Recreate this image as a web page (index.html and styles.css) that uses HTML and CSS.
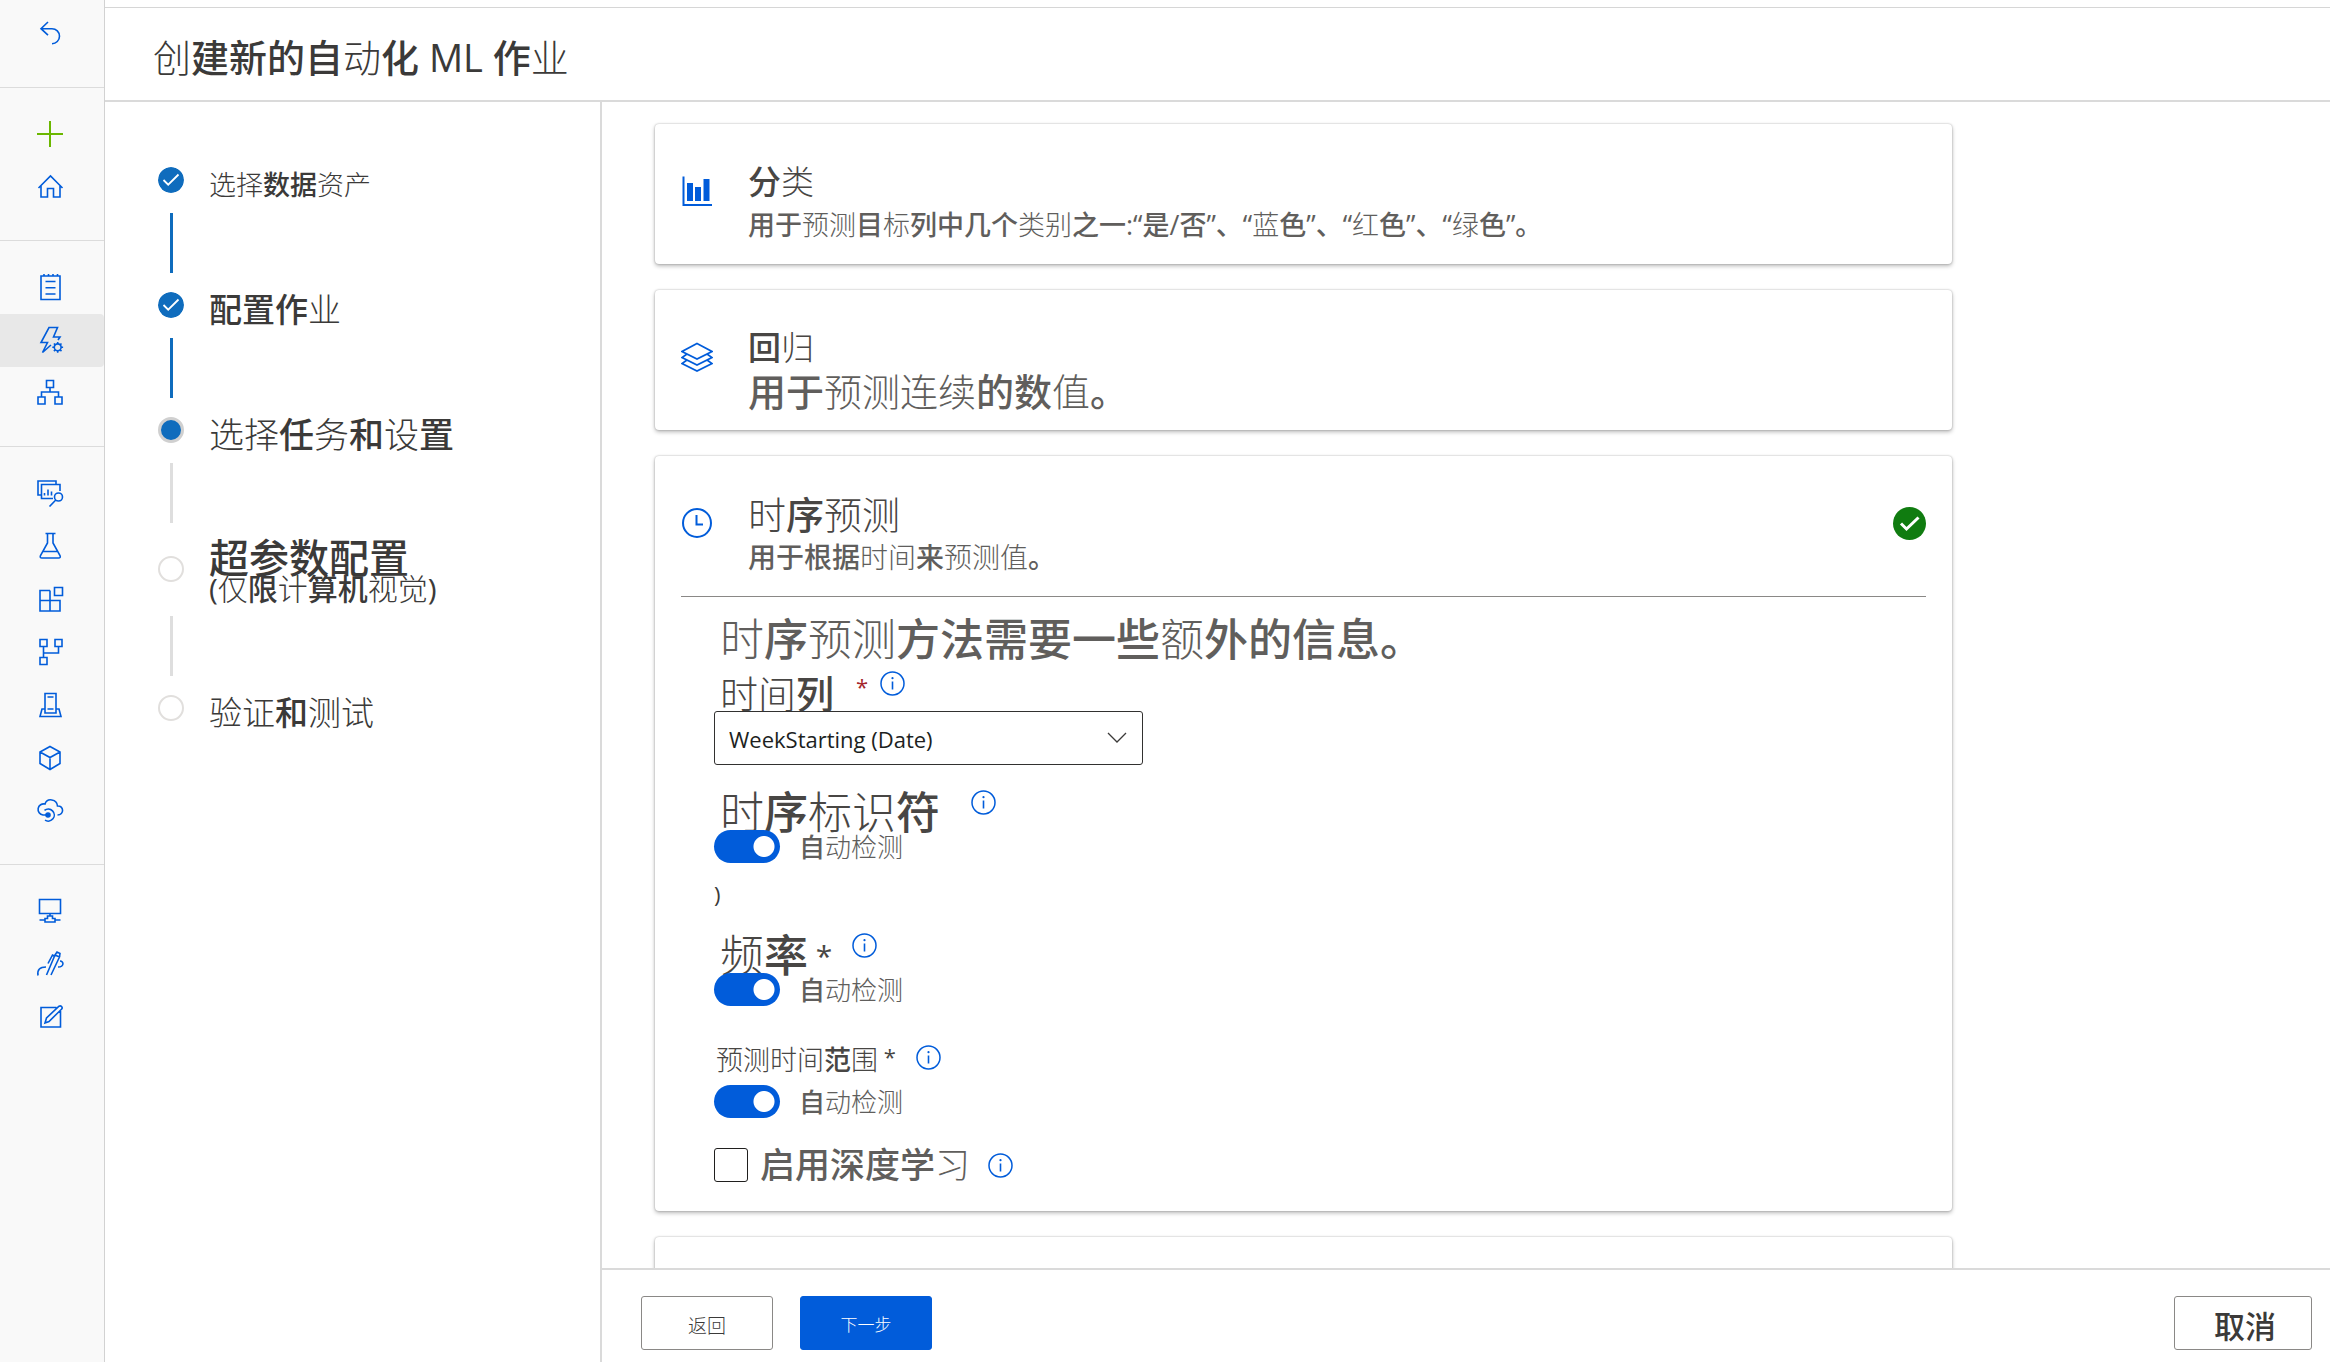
FILE: index.html
```html
<!DOCTYPE html>
<html lang="zh-CN">
<head>
<meta charset="utf-8">
<meta name="viewport" content="width=device-width, initial-scale=1">
<title>创建新的自动化 ML 作业</title>
<link rel="stylesheet" href="styles.css">
</head>
<body>
<svg class="defs" aria-hidden="true">
  <symbol id="info" viewBox="0 0 25 25"><circle cx="12.5" cy="12.5" r="11.5" fill="none" stroke="currentColor" stroke-width="1.5"/><path d="M12.5 10.5v8" stroke="currentColor" stroke-width="1.6"/><circle cx="12.5" cy="7.2" r="1.1" fill="currentColor"/></symbol>
  <symbol id="done" viewBox="0 0 26 26"><circle cx="13" cy="13" r="13" fill="#0f6cbd"/><path d="M5.5 13l4.7 4.7L20.500 7.500" fill="none" stroke="#fff" stroke-width="1.8"/></symbol>
</svg>
<div class="app">
  <nav class="rail" aria-label="导航">
    <div class="rail-group rail-group-first">
      <a href="#" class="rail-item" aria-label="后退"><svg viewBox="0 0 28 28"><path d="M12 2L5 8.700l7 6.500M5 8.700h11a7.500 7.500 0 0 1 0 15"/></svg></a>
    </div>
    <div class="rail-group">
      <a href="#" class="rail-item rail-new" aria-label="新建"><svg viewBox="0 0 28 28"><path d="M14 1v26M1 14h26"/></svg></a>
      <a href="#" class="rail-item" aria-label="主页"><svg viewBox="0 0 28 28"><path d="M2.500 15L14.500 3l12 12M5 12.500V24h6.500v-8.500h6V24H24V12.500"/></svg></a>
    </div>
    <div class="rail-group">
      <a href="#" class="rail-item" aria-label="笔记本"><svg viewBox="0 0 28 28"><path d="M5 3h19v23.500H5zM8 1v2M12.500 1v2M17 1v2M21.500 1v2M9.500 8.500h10M9.500 14.800h10M9.500 21h10"/></svg></a>
      <a href="#" class="rail-item active" aria-label="自动化 ML" aria-current="page"><svg viewBox="0 0 28 28"><path d="M22 14l2-3h-6.500l4-9.500H13L5 16.500h6.500L6.500 26.500l8.500-7.500"/><circle cx="21.700" cy="21.300" r="3.400"/><path d="M21.700 17.900v-2M21.700 26.700v-2M18.300 21.300h-2M27.100 21.300h-2M19.300 18.900l-1.400-1.400M25.500 25.100l-1.400-1.400M19.300 23.700l-1.400 1.400M25.500 17.500l-1.400 1.400"/></svg></a>
      <a href="#" class="rail-item" aria-label="设计器"><svg viewBox="0 0 28 28"><path d="M10.500 1.500h7v7h-7zM2 18h7v7H2zM19 18h7v7h-7zM14 8.500V13M5.500 18v-5h17v5"/></svg></a>
    </div>
    <div class="rail-group">
      <a href="#" class="rail-item" aria-label="数据"><svg viewBox="0 0 28 28"><path d="M20 5V2H2v14h3.500M24 12V5.500H5.500v14H17M8.500 16.500V14M12 16.500v-6M15.500 16.500v-4M19.800 21l-6.300 6.500"/><circle cx="22.500" cy="18" r="4"/></svg></a>
      <a href="#" class="rail-item" aria-label="作业"><svg viewBox="0 0 28 28"><path d="M9.500 1.500h10M11.500 1.500V11L4.500 23.500q-1 2.500 1.500 2.500h16.500q2.500 0 1.500-2.500L17 11V1.500M7 19.500h15"/></svg></a>
      <a href="#" class="rail-item" aria-label="组件"><svg viewBox="0 0 28 28"><path d="M14 5.500H4V26h20V15.500H4M14 5.500V26M18.500 2.500h8v8h-8z"/></svg></a>
      <a href="#" class="rail-item" aria-label="管道"><svg viewBox="0 0 28 28"><path d="M4 1.500h7v7H4zM19 1.500h7v7h-7zM4 19.500h7v7H4zM7.500 8.500v11M7.500 15h15V8.500"/></svg></a>
      <a href="#" class="rail-item" aria-label="环境"><svg viewBox="0 0 28 28"><path d="M9 22V2.500h11V22zM11.500 6h6M11.500 18h6M9 18H6l-2 7.500h21L23 18h-3"/></svg></a>
      <a href="#" class="rail-item" aria-label="模型"><svg viewBox="0 0 28 28"><path d="M14 2.500l10 5.500v11.500L14 25.500 4 19.500V8zM4 8l10 5.500L24 8M14 13.500v12"/></svg></a>
      <a href="#" class="rail-item" aria-label="终结点"><svg viewBox="0 0 28 28"><path d="M12 18H7A5.600 5.600 0 1 1 9 7c2-6.500 12-5 12.500 2 6.500-.5 7 9 0 9M8.500 13.400a6 6 0 1 1 .5 9.700"/><circle cx="12" cy="18" r="2" class="solid"/></svg></a>
    </div>
    <div class="rail-group rail-group-last">
      <a href="#" class="rail-item" aria-label="计算"><svg viewBox="0 0 28 28"><path d="M3.500 2.500h21v14h-21zM14 16.500V19M3.500 23h5.500M19 23h5.500M9 25v-3.500h2.500V19h5v2.500H19V25z"/></svg></a>
      <a href="#" class="rail-item" aria-label="数据标记"><svg viewBox="0 0 28 28"><path d="M2 25.500c-1-6 2-8.500 8-8.500M10.500 25l8.500-20 4.500 2-8.500 18M19 5l2-3 3 1.500-.5 3.500M12 13.500L16.500 5l2 1M22 17c6.500 0 6-6 2-6"/></svg></a>
      <a href="#" class="rail-item" aria-label="编辑"><svg viewBox="0 0 28 28"><path d="M20.500 4.500H5V24h19.500V8M9 20l1.500-5L23 3.200q2-1 3 1 .5 1-.5 2L13 18.500z"/></svg></a>
    </div>
  </nav>

  <div class="page">
    <header class="page-head">
      <h1><span class="lt">创</span>建新的自<span class="lt">动</span>化 ML 作<span class="lt">业</span></h1>
    </header>
    <div class="columns">
      <ol class="steps">
        <li class="step complete">
          <div class="step-head"><svg class="dot"><use href="#done"/></svg><span class="step-label size-s"><span class="lt">选择</span>数据<span class="lt">资产</span></span></div>
        </li>
        <li class="step complete">
          <div class="step-head"><svg class="dot"><use href="#done"/></svg><span class="step-label size-m">配置作<span class="lt">业</span></span></div>
        </li>
        <li class="step" aria-current="step">
          <div class="step-head"><span class="dot dot-current"></span><span class="step-label size-l"><span class="lt">选择</span>任<span class="lt">务</span>和<span class="lt">设</span>置</span></div>
        </li>
        <li class="step">
          <div class="step-head step-head-double"><span class="dot dot-empty"></span><span class="step-label"><span class="step-line size-h">超参数配置</span><span class="step-line size-n">(<span class="lt">仅</span>限<span class="lt">计</span>算机<span class="lt">视觉</span>)</span></span></div>
        </li>
        <li class="step">
          <div class="step-head"><span class="dot dot-empty"></span><span class="step-label size-m"><span class="lt">验证</span>和<span class="lt">测试</span></span></div>
        </li>
      </ol>

      <main class="main">
        <div class="scroll">
          <section class="card">
            <div class="card-head">
              <svg class="card-icon" viewBox="0 0 32 32"><path d="M2.500 1.500V30H31" fill="none" stroke="currentColor" stroke-width="2"/><path d="M6 8h6v18H6zM14 12h6v14h-6zM22.500 4h6v22h-6z" fill="currentColor"/></svg>
              <div>
                <h2 class="size-m">分<span class="lt">类</span></h2>
                <p class="size-s">用于<span class="lt">预测</span>目<span class="lt">标</span>列中几个<span class="lt">类别</span>之一:“是/否”、“<span class="lt">蓝</span>色”、“<span class="lt">红</span>色”、“<span class="lt">绿</span>色”。</p>
              </div>
            </div>
          </section>

          <section class="card">
            <div class="card-head">
              <svg class="card-icon" viewBox="0 0 32 32"><path d="M16 2.500l15 8-15 7.500-15-7.500zM6 13l-5 3.500L16 24l15-7.500-5-3.500M6 19l-5 3.500L16 30l15-7.500-5-3.500" fill="none" stroke="currentColor" stroke-width="1.700"/></svg>
              <div>
                <h2 class="size-m">回<span class="lt">归</span></h2>
                <p class="size-xl">用于<span class="lt">预测连续</span>的数<span class="lt">值</span>。</p>
              </div>
            </div>
          </section>

          <section class="card card-selected">
            <div class="card-head">
              <svg class="card-icon" viewBox="0 0 32 32"><circle cx="16" cy="16" r="14" fill="none" stroke="currentColor" stroke-width="2"/><path d="M15.500 8v9.500H22" fill="none" stroke="currentColor" stroke-width="2"/></svg>
              <div>
                <h2 class="size-xl"><span class="lt">时</span>序<span class="lt">预测</span></h2>
                <p class="size-d">用于根据<span class="lt">时间</span>来<span class="lt">预测值</span>。</p>
              </div>
              <svg class="badge" viewBox="0 0 33 33"><circle cx="16.500" cy="16.500" r="16.500" fill="#107c10"/><path d="M8 16.500l5.500 5.500L25.500 10.500" fill="none" stroke="#fff" stroke-width="3"/></svg>
            </div>
            <div class="card-body">
              <p class="lead"><span class="lt">时</span>序<span class="lt">预测</span>方法需要一些<span class="lt">额</span>外的信息。</p>

              <div class="field-label">
                <label for="time-col" class="size-xl"><span class="lt">时间</span>列</label><span class="star star-red">*</span>
                <svg class="info"><use href="#info"/></svg>
              </div>
              <div class="select">
                <select id="time-col"><option>WeekStarting (Date)</option></select>
                <svg viewBox="0 0 20 12"><path d="M1 1l9 9 9-9" fill="none" stroke="currentColor" stroke-width="1.300"/></svg>
              </div>

              <div class="field-label gap-after-select">
                <label for="t-series" class="size-xxl"><span class="lt">时</span>序<span class="lt">标识</span>符</label>
                <svg class="info info-far"><use href="#info"/></svg>
              </div>
              <div class="toggle"><input id="t-series" type="checkbox" role="switch" checked><label for="t-series">自<span class="lt">动检测</span></label></div>
              <p class="stray">)</p>

              <div class="field-label">
                <label for="t-freq" class="starred"><span class="size-xxl"><span class="lt">频</span>率</span><span class="size-n"> *</span></label>
                <svg class="info"><use href="#info"/></svg>
              </div>
              <div class="toggle"><input id="t-freq" type="checkbox" role="switch" checked><label for="t-freq">自<span class="lt">动检测</span></label></div>

              <div class="field-label field-label-small">
                <label for="t-range" class="starred"><span class="size-s"><span class="lt">预测时间</span>范<span class="lt">围</span></span><span class="size-t"> *</span></label>
                <svg class="info"><use href="#info"/></svg>
              </div>
              <div class="toggle"><input id="t-range" type="checkbox" role="switch" checked><label for="t-range">自<span class="lt">动检测</span></label></div>

              <div class="check"><input id="deep" type="checkbox"><label for="deep" class="size-l">启用深度学<span class="lt">习</span></label><svg class="info"><use href="#info"/></svg></div>
            </div>
          </section>

          <section class="card card-next"></section>
        </div>

        <footer class="actions">
          <button type="button" class="btn btn-back">返回</button>
          <button type="button" class="btn btn-primary">下一步</button>
          <button type="button" class="btn btn-cancel">取消</button>
        </footer>
      </main>
    </div>
  </div>
</div>
</body>
</html>
```
FILE: styles.css
```css
* { box-sizing: border-box; }

body {
  margin: 0;
  background: #fff;
  color: #3b3a39;
  font-family: "Open Sans", "Noto Sans CJK SC", sans-serif;
  font-weight: 500;
}

h1, h2, p, ol { margin: 0; padding: 0; font-weight: inherit; }

.defs { display: none; }
.lt { font-weight: 300; }

.size-t { font-size: 22px; }
.size-s { font-size: 27px; }
.size-d { font-size: 28px; }
.size-n { font-size: 30px; }
.size-m { font-size: 33px; }
.size-l { font-size: 35px; }
.size-xl { font-size: 38px; }
.size-h { font-size: 40px; }
.size-xxl { font-size: 44px; }

.app { display: flex; height: 100vh; }

/* Left icon rail */
.rail {
  flex: 0 0 105px;
  background: #f9f9f9;
  border-right: 1px solid #d2d2d2;
}
.rail-group { padding: 20px 0 26px; border-bottom: 1px solid #dcdcdc; }
.rail-group-first { padding-top: 8px; }
.rail-group-last { border-bottom: 0; }
.rail-item {
  display: flex;
  align-items: center;
  justify-content: center;
  height: 53px;
  padding: 0 4px 1px 0;
  color: #015cda;
  border-radius: 0 4px 4px 0;
}
.rail-item.active { background: #e8e8e8; }
.rail-item svg { width: 28px; height: 28px; fill: none; stroke: currentColor; stroke-width: 1.6; }
.rail-item .solid { fill: currentColor; }
.rail-item.rail-new { color: #6bb700; }
.rail-item.rail-new svg { stroke-width: 2; }

/* Page frame */
.page { flex: 1; min-width: 0; display: flex; flex-direction: column; padding-top: 7px; }
.page-head { border-top: 1px solid #d6d6d6; border-bottom: 2px solid #dadada; padding: 23px 48px 17px; }
.page-head h1 { font-size: 38px; line-height: 52px; }
.columns { flex: 1; min-height: 0; display: flex; }

/* Wizard steps */
.steps { flex: 0 0 497px; padding: 65px 20px 20px 53px; border-right: 2px solid #dadada; list-style: none; }
.step:not(:last-child)::after {
  content: "";
  display: block;
  width: 3px;
  height: 60px;
  margin: 20px 0 19px 12px;
  background: #dedede;
}
.step.complete::after { background: #0f6cbd; }
.step-head { display: flex; align-items: center; gap: 25px; height: 26px; }
.step-head-double { height: 54px; }
.step-label { padding-top: 8px; line-height: 31px; white-space: nowrap; }
.step-line { display: block; }
.dot { flex: none; width: 26px; height: 26px; border-radius: 50%; }
.dot-current { background: #0f6cbd; border: 3px solid #d0d0d0; }
.dot-empty { border: 2px solid #e1dfdd; }

/* Task cards */
.main { flex: 1; min-width: 0; display: flex; flex-direction: column; }
.scroll { flex: 1; min-height: 0; overflow-y: auto; scrollbar-width: none; padding: 22px 53px; }
.card {
  max-width: 1297px;
  min-height: 140px;
  margin-bottom: 26px;
  padding: 0 26px;
  border-radius: 4px;
  background: #fff;
  box-shadow: 0 0 2px rgba(0, 0, 0, .28), 0 2px 4px rgba(0, 0, 0, .28);
}
.card-head { display: flex; align-items: center; gap: 35px; height: 140px; padding-top: 18px; line-height: 42px; }
.card-head h2 { color: #484644; line-height: 44px; }
.card-head p { color: #605e5c; white-space: nowrap; }
.card-icon { flex: none; width: 32px; height: 32px; margin-top: -25px; color: #015cda; }
.badge { width: 33px; height: 33px; margin: -24px 0 0 auto; }
.card-body { padding: 10px 0 29px 33px; border-top: 1px solid #8a8886; }

.lead { padding-left: 6px; font-size: 44px; line-height: 64px; color: #605e5c; }
.field-label { display: flex; height: 40px; padding-left: 6px; line-height: 44px; color: #484644; }
.field-label-small { margin-top: 39px; padding-left: 2px; line-height: 30px; }
.gap-after-select { margin-top: 25px; }
.star { margin-left: 22px; font-size: 22px; line-height: 30px; }
.star-red { color: #a4262c; }
.starred > span:last-child { line-height: 20px; vertical-align: 5px; }
.info { flex: none; width: 25px; height: 25px; margin-left: 20px; color: #015cda; }
.star + .info { margin-left: 12px; }
.info-far { margin-left: 31px; }

.select { display: grid; width: 429px; align-items: center; }
.select select, .select svg { grid-area: 1 / 1; }
.select svg { justify-self: end; width: 20px; height: 12px; margin-right: 16px; pointer-events: none; }
.select select {
  appearance: none;
  height: 54px;
  padding: 2px 14px 0;
  border: 1px solid #323130;
  border-radius: 3px;
  background: #fff;
  color: #201f1e;
  font: 400 22px "Open Sans", sans-serif;
}

.toggle { display: flex; align-items: center; gap: 19px; height: 33px; color: #605e5c; font-size: 26px; line-height: 33px; }
.toggle label { padding-top: 2px; }
.toggle input {
  appearance: none;
  width: 66px;
  height: 33px;
  margin: 0;
  border-radius: 17px;
  background: radial-gradient(circle at 50px 50%, #fff 10px, #015cda 11px);
}
.stray { margin: 16px 0 24px; font-size: 22px; font-weight: 400; line-height: 30px; }

.check { display: flex; align-items: center; height: 34px; margin-top: 30px; color: #605e5c; line-height: 34px; }
.check input {
  appearance: none;
  width: 34px;
  height: 34px;
  margin: 0 12px 0 0;
  border: 1px solid #201f1e;
  border-radius: 3px;
}
.check .info { margin-left: 18px; }

/* Footer buttons */
.actions { display: flex; gap: 27px; padding: 26px 18px 12px 39px; border-top: 2px solid #dadada; }
.btn {
  width: 132px;
  height: 54px;
  padding: 0;
  border: 1px solid #8a8886;
  border-radius: 3px;
  background: #fff;
  color: #3b3a39;
  font-family: inherit;
}
.btn-back { padding-top: 3px; font-size: 19px; font-weight: 300; }
.btn-primary { border-color: #015cda; background: #015cda; color: #fff; font-size: 17px; font-weight: 300; }
.btn-cancel { width: 138px; padding: 3px 0 0 4px; margin-left: auto; font-size: 31px; font-weight: 500; }
```
